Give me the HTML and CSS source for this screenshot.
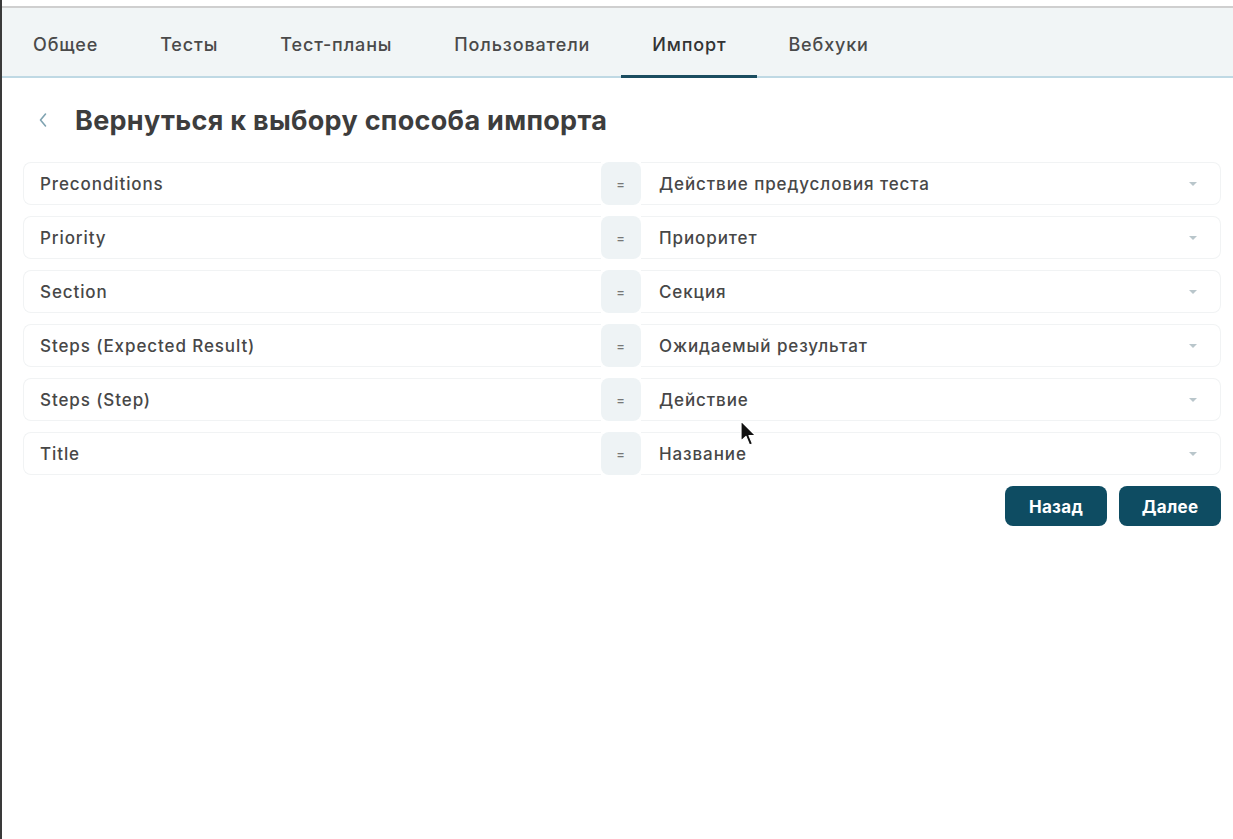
FILE: index.html
```html
<!DOCTYPE html>
<html lang="ru">
<head>
  <meta charset="UTF-8">
  <meta name="viewport" content="width=device-width, initial-scale=1.0">
  <title>Импорт</title>
  <link rel="stylesheet" href="styles.css">
</head>
<body>
  <div id="page">
    <div id="tabs">
      <div class="tab">Общее</div>
      <div class="tab">Тесты</div>
      <div class="tab">Тест-планы</div>
      <div class="tab">Пользователи</div>
      <div class="tab active">Импорт</div>
      <div class="tab">Вебхуки</div>
    </div>

    <div id="content">
      <div class="back">
        <svg class="chevron" width="10" height="16" viewBox="0 0 10 16">
          <path d="M7.5 2 L2.5 8 L7.5 14" fill="none" stroke="#7fa3b1" stroke-width="1.6" stroke-linecap="round" stroke-linejoin="round"/>
        </svg>
        <h1>Вернуться к выбору способа импорта</h1>
      </div>

      <div id="mapping"></div>

      <div class="actions">
        <button class="btn">Назад</button>
        <button class="btn">Далее</button>
      </div>
    </div>

    <svg class="cursor" width="18" height="28" viewBox="0 0 18 28">
      <path d="M1 1 L1 21 L6 16.5 L9.5 25 L12.5 23.7 L9 15.5 L15.5 15.5 Z" fill="#111" stroke="#fff" stroke-width="1.2" stroke-linejoin="round"/>
    </svg>
  </div>

<script>
    const fields = [
      { source: "Preconditions", target: "Действие предусловия теста" },
      { source: "Priority", target: "Приоритет" },
      { source: "Section", target: "Секция" },
      { source: "Steps (Expected Result)", target: "Ожидаемый результат" },
      { source: "Steps (Step)", target: "Действие" },
      { source: "Title", target: "Название" }
    ];

    function renderMapping() {
      const list = document.getElementById("mapping");
      list.innerHTML = "";

      fields.forEach(field => {
        const row = document.createElement("div");
        row.className = "row";
        row.innerHTML =
          `<div class="source">${field.source}</div>` +
          `<div class="eq">=</div>` +
          `<div class="target"><span>${field.target}</span><i class="arrow"></i></div>`;
        list.appendChild(row);
      });
    }

    renderMapping();
  </script>
</body>
</html>
```

FILE: styles.css
```css
body {
  margin: 0;
  font-family: Inter, "Noto Sans", sans-serif;
  color: #434343;
  background: #fff;
}

#page {
  position: relative;
  min-height: 839px;
  box-sizing: border-box;
  padding-top: 6px;
  border-left: 2px solid #3a3a3a;
}

#tabs {
  display: flex;
  height: 68px;
  background-color: #f1f5f6;
  border-top: 2px solid #cfcfcf;
  border-bottom: 2px solid #bfd9e4;
}

.tab {
  display: flex;
  align-items: center;
  padding: 5px 31px 0;
  font-size: 18px;
  font-weight: 500;
  letter-spacing: 0.85px;
  color: #4a4a4a;
  margin-bottom: -2px;
  border-bottom: 3px solid transparent;
}

.tab.active {
  color: #333;
  border-bottom-color: #1b4d60;
}

#content {
  padding: 0 12px 0 21px;
}

.back {
  display: flex;
  align-items: center;
  gap: 27px;
  height: 84px;
  padding-left: 15px;
}

.back h1 {
  margin: 0;
  font-size: 27px;
  font-weight: 700;
  color: #3d3d3d;
  letter-spacing: 0.3px;
}

#mapping {
  display: flex;
  flex-direction: column;
  gap: 11px;
}

.row {
  display: grid;
  grid-template-columns: 1fr 40px 580px;
  height: 43px;
  font-size: 17px;
  font-weight: 500;
  letter-spacing: 0.9px;
  color: #474747;
}

.source {
  display: flex;
  align-items: center;
  padding-left: 16px;
  border: 1px solid #f1f3f4;
  border-right: none;
  border-radius: 8px 0 0 8px;
}

.eq {
  display: flex;
  align-items: center;
  justify-content: center;
  background-color: #eef3f5;
  border-radius: 8px;
  font-size: 13px;
  color: #777;
}

.target {
  display: flex;
  align-items: center;
  justify-content: space-between;
  padding: 0 23px 0 18px;
  border: 1px solid #f1f3f4;
  border-left: none;
  border-radius: 0 8px 8px 0;
}

.arrow {
  width: 0;
  height: 0;
  border-left: 4px solid transparent;
  border-right: 4px solid transparent;
  border-top: 4px solid #b9c6cb;
}

.actions {
  display: flex;
  justify-content: flex-end;
  gap: 12px;
  margin-top: 11px;
}

.btn {
  width: 102px;
  height: 40px;
  padding-top: 3px;
  border: none;
  border-radius: 8px;
  background-color: #0e4c62;
  color: #fff;
  font-family: Inter, "Noto Sans", sans-serif;
  font-size: 17px;
  font-weight: 700;
  letter-spacing: 0.3px;
  cursor: pointer;
}

.cursor {
  position: absolute;
  left: 738px;
  top: 420px;
}
```
